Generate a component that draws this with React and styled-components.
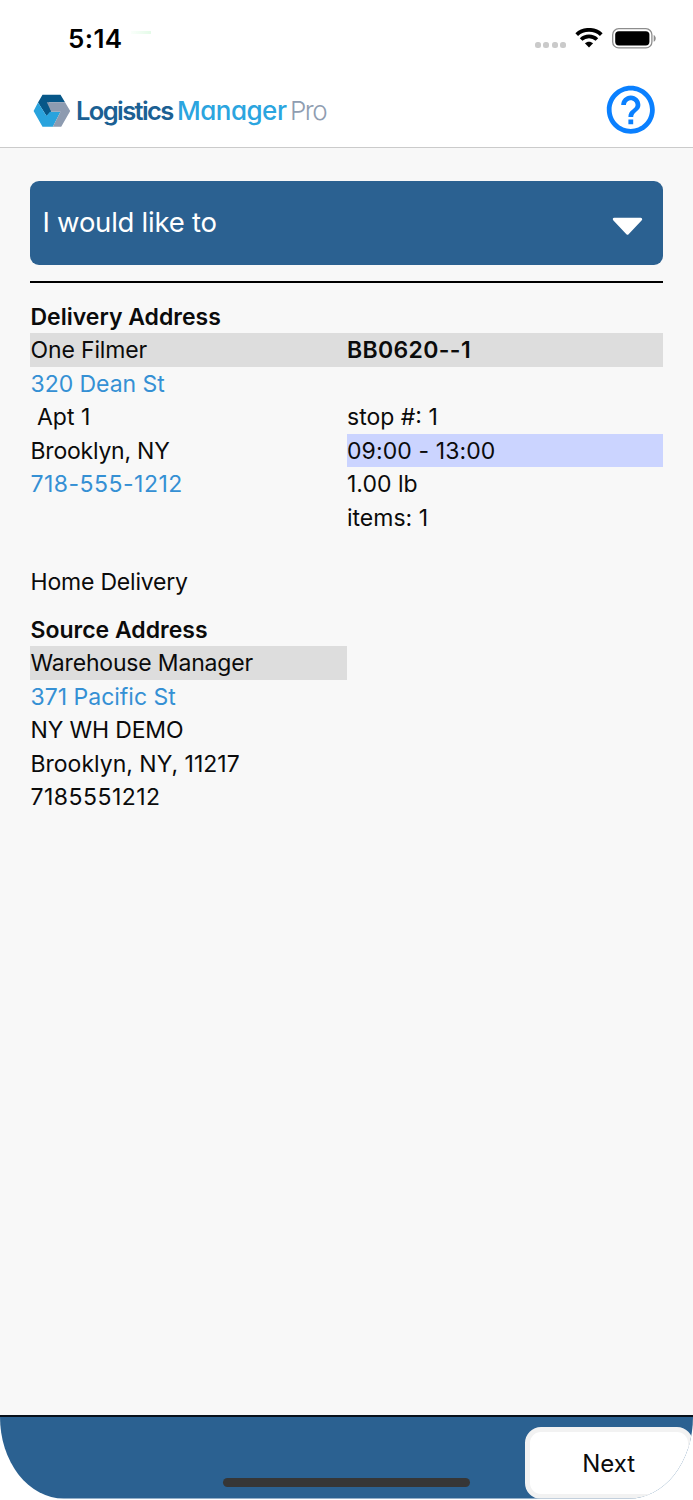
import React from 'react';
import styled, { createGlobalStyle } from 'styled-components';
import { MdHelpOutline } from 'react-icons/md';

const delivery = [
    { left: 'One Filmer', right: 'BB0620--1', shaded: true, strong: true, track: -0.15, rightTrack: 0.35 },
    { left: '320 Dean St', link: true, track: -0.05 },
    { left: '\u00a0Apt 1', right: 'stop #: 1' },
    { left: 'Brooklyn, NY', right: '09:00 - 13:00', highlight: true, track: -0.22, rightTrack: 0.1 },
    { left: '718-555-1212', link: true, right: '1.00 lb', track: 0.48 },
    { right: 'items: 1' },
];

const source = [
    { left: 'Warehouse Manager', shadedLeft: true, track: -0.18 },
    { left: '371 Pacific St', link: true },
    { left: 'NY WH DEMO', track: -0.15 },
    { left: 'Brooklyn, NY, 11217' },
    { left: '7185551212', track: 0.48 },
];

const AddressRows = ({rows}) =>{
    return rows.map((row,i) => (
        <Row key={i} $shaded={row.shaded}>
            <Cell $shaded={row.shadedLeft}>
                {row.link
                    ?<Link href="#" $track={row.track}>{row.left}</Link>
                    :<Value $track={row.track}>{row.left}</Value>}
            </Cell>
            <Cell $highlight={row.highlight}>
                <Value $strong={row.strong} $track={row.rightTrack}>{row.right}</Value>
            </Cell>
        </Row>
    ));
};

const App = () =>{
    return (
        <Screen>
            <GlobalStyle />
            <StatusBar>
                <TimeGroup>
                    <Time>5:14</Time>
                    <LocationTrace />
                </TimeGroup>
                <StatusIcons>
                    <Signal><Dot /><Dot /><Dot /><Dot /></Signal>
                    <svg width="28" height="20" viewBox="0 0 28 20" fill="none">
                        <path d="M1.7 6.6C8.5 .3 19.5 .3 26.3 6.6" stroke="#000" strokeWidth="3.9" />
                        <path d="M6.1 11.5C10.5 7.3 17.5 7.3 21.9 11.5" stroke="#000" strokeWidth="3.8" />
                        <path d="M9.9 15.3C12.2 13.1 15.8 13.1 18.1 15.3L14 19.6Z" fill="#000" />
                    </svg>
                    <BatteryIcon width="45" height="21" viewBox="0 0 45 21">
                        <rect x="0.7" y="0.7" width="39.2" height="19.2" rx="6" fill="none" stroke="#8d8d8d" strokeWidth="1.3" />
                        <rect x="3.2" y="3.2" width="34.2" height="14.2" rx="3.6" />
                        <path d="M41.7 7C44.4 8.2 44.4 12.6 41.7 13.8Z" fill="#8d8d8d" />
                    </BatteryIcon>
                </StatusIcons>
            </StatusBar>
            <Header>
                <Brand>
                    <BrandMark width="38" height="34" viewBox="0 0 38 34">
                        <path d="M9.5 .8H27.5L32 8.3H15.8L18.3 17.5L13.5 22L5 8.5Z" fill="#075788" />
                        <path d="M5 8.5L13.5 22L17 17.8H27.5L19.8 32.8H9.5L.6 17Z" fill="#29a3dd" />
                        <path d="M13.8 8.3H32L37.2 17L28.2 32.8H19.8L27.5 17.8H18.3Z" fill="#8d9bb0" />
                    </BrandMark>
                    <BrandText>
                        <Logistics>Logistics</Logistics>
                        <Manager>Manager</Manager>
                        <Pro>Pro</Pro>
                    </BrandText>
                </Brand>
                <HelpButton aria-label="Help"><MdHelpOutline /></HelpButton>
            </Header>
            <Main>
                <ActionSelect>
                    <span>I would like to</span>
                    <svg width="31" height="19" viewBox="0 0 31 19">
                        <path d="M2.3 2.2H28.7L15.5 16.2Z" fill="#fff" stroke="#fff" strokeWidth="3" strokeLinejoin="round" />
                    </svg>
                </ActionSelect>
                <Divider />
                <Title>Delivery Address</Title>
                <AddressRows rows={delivery} />
                <Service>Home Delivery</Service>
                <Title>Source Address</Title>
                <AddressRows rows={source} />
            </Main>
            <Footer>
                <FooterBar>
                    <NextButton>Next</NextButton>
                    <HomeIndicator />
                </FooterBar>
            </Footer>
        </Screen>
    );
};

const GlobalStyle=createGlobalStyle`
    *{ box-sizing:border-box; }
    body{
        margin:0;
        background:white;
        font-family:Inter, "Liberation Sans", sans-serif;
        color:#0b0b0b;
    }
    svg{ display:block; flex:none; }
`;
const Screen=styled.div`
    width:693px;
    height:1500px;
    display:flex;
    flex-direction:column;
    overflow:hidden;
`;
const StatusBar=styled.div`
    height:72px;
    padding:4px 36.5px 0 68px;
    display:flex;
    align-items:center;
    justify-content:space-between;
`;
const TimeGroup=styled.div`
    display:flex;
    align-items:center;
    gap:8px;
`;
const Time=styled.div`
    font-size:26px;
    font-weight:600;
    letter-spacing:0.4px;
    color:black;
`;
const LocationTrace=styled.div`
    width:20px;
    height:3px;
    margin-bottom:12px;
    background:linear-gradient(90deg, #fafffb, #e4fbe8);
`;
const StatusIcons=styled.div`
    display:flex;
    align-items:center;
`;
const Signal=styled.div`
    display:flex;
    gap:2.4px;
    padding-top:13px;
    margin-right:8.5px;
`;
const Dot=styled.div`
    width:6px;
    height:6px;
    border-radius:2.5px;
    background:#cacaca;
`;
const BatteryIcon=styled.svg`
    margin-left:9px;
`;
const Header=styled.header`
    height:76px;
    padding:0 33px;
    display:flex;
    align-items:center;
    justify-content:space-between;
    border-bottom:1px solid #cbcbcb;
`;
const Brand=styled.div`
    display:flex;
    align-items:center;
    gap:5px;
`;
const BrandMark=styled.svg`
    margin-top:2px;
`;
const BrandText=styled.div`
    display:flex;
    margin-top:2px;
    font-size:26px;
    line-height:34px;
    font-feature-settings:"cv11";
`;
const Logistics=styled.span`
    width:101px;
    font-size:25.5px;
    font-weight:600;
    letter-spacing:-1.6px;
    color:#1b6093;
`;
const Manager=styled.span`
    width:113px;
    font-weight:500;
    letter-spacing:-0.5px;
    color:#2ba5df;
`;
const Pro=styled.span`
    font-weight:350;
    letter-spacing:-1.5px;
    color:#8f9db1;
`;
const HelpButton=styled.button`
    border:0;
    padding:0;
    background:none;
    display:flex;
    color:#0a80ff;
    font-size:57.6px;
`;
const Main=styled.main`
    flex:1;
    padding:33px 30px 0;
    background:#f8f8f8;
`;
const ActionSelect=styled.div`
    height:83.5px;
    padding:0 20px 0 12.5px;
    display:flex;
    align-items:center;
    justify-content:space-between;
    border-radius:9px;
    background:#2b6191;
    color:white;
    font-size:27.5px;
    font-weight:380;
    letter-spacing:-0.25px;
    span{ margin-top:-2px; }
    svg{ margin-top:7px; }
`;
const Divider=styled.div`
    height:2px;
    margin:16.5px 0 17px;
    background:black;
`;
const Title=styled.div`
    height:33.45px;
    padding-left:0.5px;
    font-size:23px;
    line-height:35.4px;
    font-weight:600;
`;
const Row=styled.div`
    height:33.45px;
    display:grid;
    grid-template-columns:1fr 1fr;
    background:${props => props.$shaded ? '#dddddd' : 'transparent'};
`;
const Cell=styled.div`
    height:33.45px;
    padding-left:0.5px;
    font-size:23px;
    line-height:35.9px;
    white-space:nowrap;
    background:${props => props.$highlight ? '#cbd4ff' : props.$shaded ? '#dddddd' : 'transparent'};
`;
const Value=styled.span`
    font-weight:${props => props.$strong ? 600 : 400};
    letter-spacing:${props => props.$track || 0}px;
`;
const Link=styled.a`
    color:#3590d4;
    text-decoration:none;
    letter-spacing:${props => props.$track || 0}px;
`;
const Service=styled.div`
    height:33.45px;
    margin:31px 0 14.3px;
    padding-left:0.5px;
    font-size:23px;
    line-height:35.4px;
    letter-spacing:-0.2px;
`;
const Footer=styled.footer`
    border-top:2px solid #07101a;
    padding-bottom:1.5px;
`;
const FooterBar=styled.div`
    position:relative;
    height:81.5px;
    padding-top:9.5px;
    display:flex;
    justify-content:flex-end;
    align-items:flex-start;
    clip-path:inset(0 round 0 0 64px 64px / 0 0 82px 82px);
    background:#2b6191;
`;
const NextButton=styled.button`
    width:168.5px;
    height:72px;
    padding:2px 0 0;
    border:5px solid #f2f2f2;
    border-radius:16px;
    background:white;
    color:#0b0b0b;
    font-family:inherit;
    font-size:24px;
`;
const HomeIndicator=styled.div`
    position:absolute;
    left:223px;
    bottom:12px;
    width:247px;
    height:8.5px;
    border-radius:5px;
    background:#363636;
`;

export default App;
